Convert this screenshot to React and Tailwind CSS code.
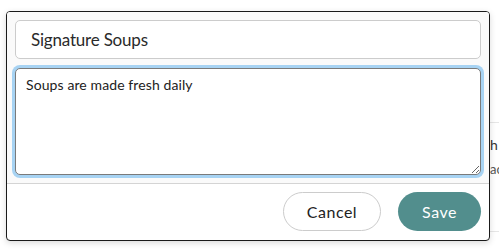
import React from "react";

const EditSection = () => {
  return (
    <div className="relative h-[250px] w-[499px] overflow-hidden bg-white font-['Lato',sans-serif] text-[#222]">
      {/* page behind the dialog */}
      <div className="pt-[122px] pl-[490px]">
        <div className="h-[110px] border-y border-[#e6e6e6] pt-[14px] text-[14px] leading-[16px] text-[#333]">
          <div className="flex items-center gap-[3px]">
            <span>h</span>
            <span className="h-[14px] w-[2px] bg-[#ddd]" />
          </div>
          <div className="mt-[8px] text-[13px] text-[#555]">ac</div>
        </div>
      </div>

      {/* dialog */}
      <div className="absolute left-[6px] top-[11px] w-[484px] h-[230px] rounded-[4px] border border-[#1a1a1a] bg-white shadow-[0_2px_6px_rgba(0,0,0,0.15)] overflow-hidden">
        <div className="bg-[#fafafa] px-[8px] pt-[8px] pb-[8px] border-b border-[#d4d4d4]">
          <input
            type="text"
            defaultValue="Signature Soups"
            className="block w-full h-[39px] rounded-[5px] border border-[#cccccc] bg-white px-[15px] text-[17px] tracking-[-0.2px] text-[#2a2a2a] outline-none"
          />
          <textarea
            defaultValue="Soups are made fresh daily"
            className="mt-[9px] block w-full h-[107px] rounded-[5px] border border-[#7a7a7a] bg-white px-[10px] py-[7px] text-[14px] leading-[18px] tracking-[0.1px] text-[#222] outline-none ring-[3px] ring-[#a7d3f3]"
          />
        </div>
        <div className="flex justify-end gap-[17px] px-[8px] pt-[8px]">
          <button className="h-[39px] w-[98px] rounded-full border border-[#cccccc] bg-white text-[16px] tracking-[0.5px] text-[#222]">
            Cancel
          </button>
          <button className="h-[39px] w-[83px] rounded-full bg-[#528e8d] text-[16px] tracking-[0.5px] text-white">
            Save
          </button>
        </div>
      </div>
    </div>
  );
};

export default function App() {
  return <EditSection />;
}
